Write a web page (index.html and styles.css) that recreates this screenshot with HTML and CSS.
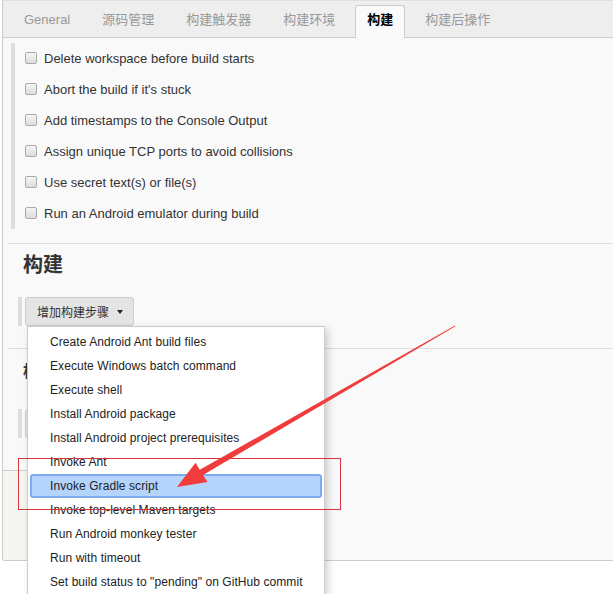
FILE: index.html
```html
<!DOCTYPE html>
<html lang="zh-cn">
<head>
  <meta charset="UTF-8">
  <meta name="viewport" content="width=device-width, initial-scale=1.0">
  <title>构建配置</title>
  <link rel="stylesheet" href="styles.css">
</head>
<body>
  <div class="config">
    <div class="tabbar">
      <span class="tab">General</span>
      <span class="tab">源码管理</span>
      <span class="tab">构建触发器</span>
      <span class="tab">构建环境</span>
      <span class="tab active">构建</span>
      <span class="tab">构建后操作</span>
    </div>

    <div class="options">
      <label class="option"><input type="checkbox"> Delete workspace before build starts</label>
      <label class="option"><input type="checkbox"> Abort the build if it's stuck</label>
      <label class="option"><input type="checkbox"> Add timestamps to the Console Output</label>
      <label class="option"><input type="checkbox"> Assign unique TCP ports to avoid collisions</label>
      <label class="option"><input type="checkbox"> Use secret text(s) or file(s)</label>
      <label class="option"><input type="checkbox"> Run an Android emulator during build</label>
    </div>

    <div class="section">
      <h2>构建</h2>
      <div class="step-bar">
        <button class="add-btn">增加构建步骤 <span class="caret"></span></button>
      </div>
    </div>

    <div class="section post">
      <h2>构建后操作</h2>
      <div class="step-bar">
        <button class="add-btn">增加构建后操作步骤 <span class="caret"></span></button>
      </div>
    </div>

    <div class="bottom-box"></div>
  </div>

  <!-- menu opened from the "增加构建步骤" button -->
  <ul class="menu">
    <li>Create Android Ant build files</li>
    <li>Execute Windows batch command</li>
    <li>Execute shell</li>
    <li>Install Android package</li>
    <li>Install Android project prerequisites</li>
    <li>Invoke Ant</li>
    <li class="hl">Invoke Gradle script</li>
    <li>Invoke top-level Maven targets</li>
    <li>Run Android monkey tester</li>
    <li>Run with timeout</li>
    <li>Set build status to "pending" on GitHub commit</li>
  </ul>

  <!-- screenshot annotation: red box and arrow -->
  <svg class="annot" width="613" height="594" viewBox="0 0 613 594">
    <rect x="18.5" y="458.5" width="322" height="51" fill="none" stroke="#d3363c" stroke-width="1"/>
    <polygon fill="#f03c3c" points="177,487 195.5,462.8 199.8,469.8 455,325.5 455.4,326.3 203,475 207.5,482"/>
  </svg>
</body>
</html>
```

FILE: styles.css
```css
html, body {
    margin: 0;
    height: 100%;
    overflow: hidden;
    background-color: #fff;
}

body {
    position: relative;
    font-family: "Liberation Sans", "Noto Sans CJK SC", sans-serif;
    font-size: 13px;
    color: #333;
}

.config {
    margin-left: 2px;
    background-color: #f9f9f9;
    border-left: 1px solid #ccc;
    border-bottom: 1px solid #ccc;
    border-bottom-left-radius: 3px;
}

.tabbar {
    display: flex;
    align-items: flex-end;
    height: 38px;
    box-sizing: border-box;
    padding-left: 9px;
    background-color: #eee;
    border-top: 1px solid #e0e0e0;
    border-bottom: 1px solid #ccc;
}

.tab {
    height: 33px;
    box-sizing: border-box;
    margin-bottom: -1px;
    margin-right: 8px;
    padding: 0 11px;
    line-height: 28px;
    color: #999;
    border: 1px solid transparent;
    border-bottom: 0;
    border-radius: 3px 3px 0 0;
    white-space: nowrap;
}

.tab.active {
    background-color: #fafafa;
    border-color: #ccc;
    color: #000;
    font-weight: bold;
}

.options {
    margin: 5px 0 14px 8px;
    padding-left: 10px;
    border-left: 4px solid #ddd;
}

.option {
    display: flex;
    align-items: center;
    gap: 7px;
    height: 31px;
}

.option input[type="checkbox"] {
    appearance: none;
    -webkit-appearance: none;
    width: 12px;
    height: 12px;
    margin: 0 0 2px 0;
    border: 1px solid #aaa;
    border-radius: 2px;
    background: linear-gradient(#f5f5f5, #dcdcdc);
}

.section {
    margin-left: 5px;
    border-top: 1px solid #ddd;
    padding-bottom: 22px;
}

.section h2 {
    margin: 0;
    padding: 9px 0 0 15px;
    font-size: 20px;
    line-height: 24px;
    font-weight: bold;
    color: #333;
}

.step-bar {
    display: flex;
    margin: 20px 0 0 10px;
    padding-left: 3px;
    border-left: 4px solid #ddd;
}

.section.post {
    padding-bottom: 32px;
}

.section.post h2 {
    font-size: 16px;
    padding-top: 11px;
}

.section.post .step-bar {
    margin-top: 25px;
}

.add-btn {
    display: flex;
    align-items: center;
    gap: 8px;
    height: 29px;
    padding: 0 10px 0 11px;
    font-family: inherit;
    font-size: 12px;
    color: #333;
    background-color: #e4e4e4;
    border: 1px solid #ccc;
    border-radius: 3px;
}

.caret {
    width: 0;
    height: 0;
    border-top: 4px solid #222;
    border-left: 3.5px solid transparent;
    border-right: 3.5px solid transparent;
}

.bottom-box {
    width: 310px;
    height: 89px;
    background-color: #f4f6ef;
    border-top: 1px solid #ccc;
    border-bottom-left-radius: 3px;
}

.menu {
    position: absolute;
    left: 27px;
    top: 326px;
    width: 298px;
    box-sizing: border-box;
    margin: 0;
    padding: 3px 0 0;
    list-style: none;
    background-color: #fff;
    border: 1px solid #ccc;
    box-shadow: 3px 3px 8px rgba(0, 0, 0, 0.18);
    font-size: 12px;
    letter-spacing: 0.07px;
    color: #222;
}

.menu li {
    height: 24px;
    line-height: 24px;
    padding-left: 22px;
    white-space: nowrap;
}

.menu li.hl {
    box-sizing: border-box;
    margin: 0 2px;
    padding-left: 18px;
    line-height: 20px;
    background-color: #b4d4fc;
    border: 2px solid #7cabf1;
    border-radius: 3px;
}

.annot {
    position: absolute;
    left: 0;
    top: 0;
    pointer-events: none;
}
```
